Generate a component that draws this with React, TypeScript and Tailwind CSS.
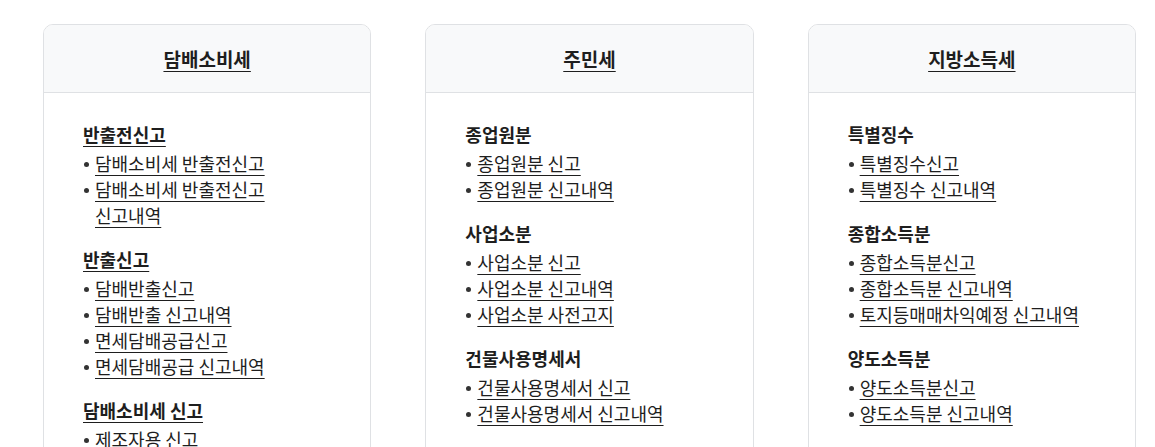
import React from "react";

type Group = {
  title: string;
  items: string[];
};

type Card = {
  title: string;
  linkedHeadings?: boolean;
  groups: Group[];
};

const cards: Card[] = [
  {
    title: "담배소비세",
    linkedHeadings: true,
    groups: [
      {
        title: "반출전신고",
        items: ["담배소비세 반출전신고", "담배소비세 반출전신고 신고내역"],
      },
      {
        title: "반출신고",
        items: [
          "담배반출신고",
          "담배반출 신고내역",
          "면세담배공급신고",
          "면세담배공급 신고내역",
        ],
      },
      {
        title: "담배소비세 신고",
        items: ["제조자용 신고", "제조자용 신고내역", "수입판매업자용 신고"],
      },
    ],
  },
  {
    title: "주민세",
    groups: [
      { title: "종업원분", items: ["종업원분 신고", "종업원분 신고내역"] },
      {
        title: "사업소분",
        items: ["사업소분 신고", "사업소분 신고내역", "사업소분 사전고지"],
      },
      {
        title: "건물사용명세서",
        items: ["건물사용명세서 신고", "건물사용명세서 신고내역"],
      },
    ],
  },
  {
    title: "지방소득세",
    groups: [
      { title: "특별징수", items: ["특별징수신고", "특별징수 신고내역"] },
      {
        title: "종합소득분",
        items: ["종합소득분신고", "종합소득분 신고내역", "토지등매매차익예정 신고내역"],
      },
      { title: "양도소득분", items: ["양도소득분신고", "양도소득분 신고내역"] },
    ],
  },
];

function TaxCard({ card }: { card: Card }) {
  return (
    <div className="border border-[#dfe1e4] rounded-[10px] overflow-hidden bg-white">
      <div className="bg-[#f8f9fa] border-b border-[#dfe1e4] py-[20px] text-center">
        <a
          href="#"
          className="text-[19px] leading-[27px] font-bold text-[#1e1e1e] underline underline-offset-[4px] decoration-1"
        >
          {card.title}
        </a>
      </div>
      <div className="pl-[39px] pr-[39px] pt-[28px] pb-6 flex flex-col gap-[18px]">
        {card.groups.map((group) => (
          <div key={group.title}>
            <h3 className="text-[18px] leading-[26px] font-bold text-[#1e1e1e] mb-[3px] break-keep">
              {card.linkedHeadings ? (
                <a href="#" className="underline underline-offset-[4px] decoration-1">
                  {group.title}
                </a>
              ) : (
                group.title
              )}
            </h3>
            <ul className="flex flex-col">
              {group.items.map((item) => (
                <li key={item} className="flex text-[18px] leading-[26px] text-[#1e1e1e]">
                  <span className="w-[12px] shrink-0 flex items-start pt-[12px] pl-[1px]">
                    <span className="block w-[5px] h-[5px] rounded-full bg-[#333]" />
                  </span>
                  <a
                    href="#"
                    className="underline underline-offset-[4px] decoration-1 break-keep"
                  >
                    {item}
                  </a>
                </li>
              ))}
            </ul>
          </div>
        ))}
      </div>
    </div>
  );
}

export default function App() {
  return (
    <div
      className="min-h-screen bg-white pt-[24px] pl-[43px]"
      style={{ fontFamily: '"Noto Sans CJK KR", "Noto Sans", sans-serif' }}
    >
      <div className="w-[1093px] grid grid-cols-3 gap-[54px] items-stretch">
        {cards.map((card) => (
          <TaxCard key={card.title} card={card} />
        ))}
      </div>
    </div>
  );
}
